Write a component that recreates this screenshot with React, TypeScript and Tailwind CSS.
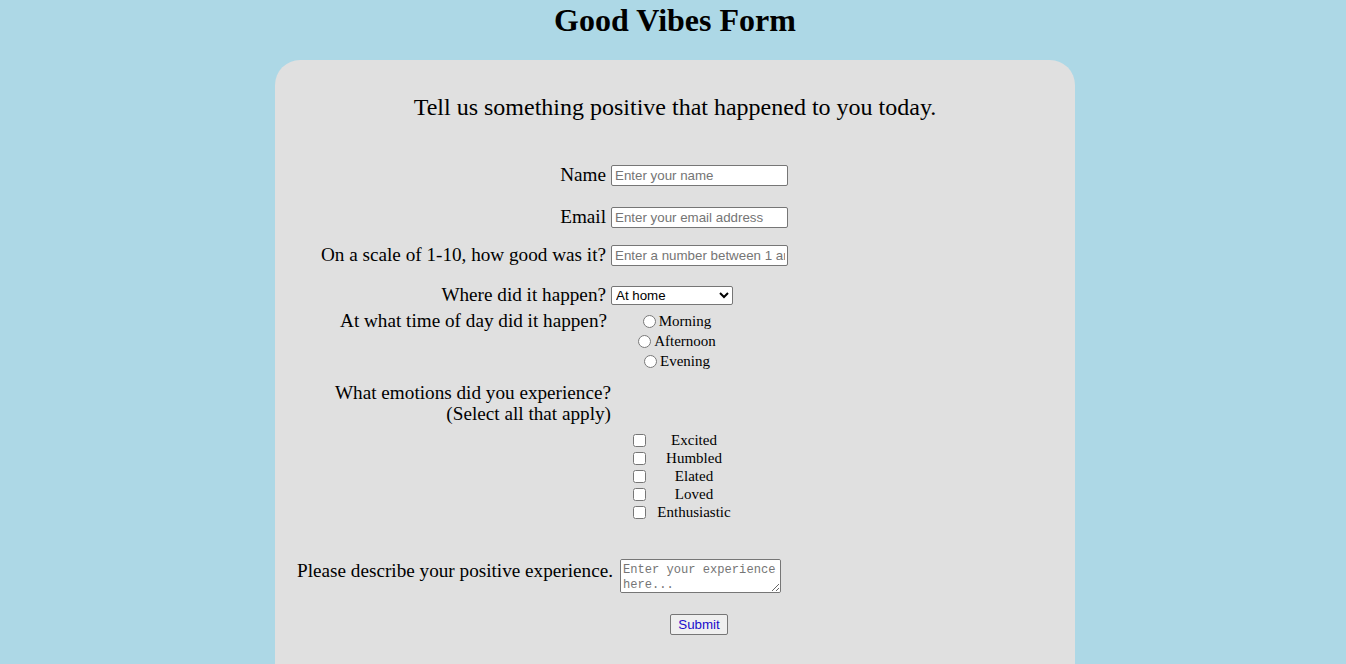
import React from "react";

const serif = "font-['Liberation_Serif','Times_New_Roman',serif]";
const inputCls =
  "h-[21px] w-[177px] rounded-[2px] border border-[#767676] bg-white pl-[3px] pr-[2px] font-['Liberation_Sans',Arial,sans-serif] text-[13.33px] text-black placeholder:text-[#757575]";

const times = ["Morning", "Afternoon", "Evening"];
const emotions = ["Excited", "Humbled", "Elated", "Loved", "Enthusiastic"];

const App = () => {
  return (
    <div className={`min-h-screen bg-[#add8e6] pl-[4px] text-black ${serif}`}>
      <h1 className="pt-[2px] text-center text-[32px] font-bold leading-[37px]">Good Vibes Form</h1>

      <div className="mx-auto mt-[21px] h-[640px] w-[800px] rounded-[25px] bg-[#e0e0e0] pt-[33px]">
        <h2 className="text-center text-[24px] leading-[28px]">
          Tell us something positive that happened to you today.
        </h2>

        <form className="flex flex-col" onSubmit={(e) => e.preventDefault()}>
          <div className="mt-[44px] flex h-[21px] items-center">
            <label className="-mt-[2px] w-[331px] text-right text-[19.2px] leading-[21px]">Name</label>
            <input className={`ml-[5px] ${inputCls}`} type="text" placeholder="Enter your name" />
          </div>

          <div className="mt-[21px] flex h-[21px] items-center">
            <label className="-mt-[2px] w-[331px] text-right text-[19.2px] leading-[21px]">Email</label>
            <input className={`ml-[5px] ${inputCls}`} type="email" placeholder="Enter your email address" />
          </div>

          <div className="mt-[17px] flex h-[21px] items-center">
            <label className="-mt-[2px] w-[331px] text-right text-[19.2px] leading-[21px]">
              On a scale of 1-10, how good was it?
            </label>
            <input
              className={`ml-[5px] ${inputCls}`}
              type="text"
              placeholder="Enter a number between 1 and 10"
            />
          </div>

          <div className="mt-[20px] flex h-[19px] items-center">
            <label className="-mt-[2px] w-[331px] text-right text-[19.2px] leading-[21px]">Where did it happen?</label>
            <select
              className="ml-[5px] h-[19px] w-[122px] rounded-[2px] border border-[#767676] bg-white font-['Liberation_Sans',Arial,sans-serif] text-[13.33px]"
              defaultValue="home"
            >
              <option value="home">At home</option>
              <option value="work">At work</option>
              <option value="school">At school</option>
              <option value="other">Somewhere else</option>
            </select>
          </div>

          <div className="mt-[6px] flex items-start">
            <label className="-mt-[1px] w-[332px] text-right text-[19.2px] leading-[21px]">
              At what time of day did it happen?
            </label>
            <div className="ml-[4px] flex w-[132px] flex-col items-center">
              {times.map((t) => (
                <label key={t} className="flex h-[20px] items-center text-[15px]">
                  <input type="radio" name="time" className="m-0 mr-[3px] h-[13px] w-[13px]" />
                  <span className="mt-[1px]">{t}</span>
                </label>
              ))}
            </div>
          </div>

          <div className="mt-[11px] w-[336px] text-right text-[19.2px] leading-[21px]">
            What emotions did you experience?
            <br />
            (Select all that apply)
          </div>

          <div className="ml-[358px] mt-[7px] flex flex-col">
            {emotions.map((e) => (
              <label key={e} className="flex h-[18px] items-center text-[15px]">
                <input type="checkbox" className="m-0 h-[13px] w-[13px]" />
                <span className="ml-[8px] w-[80px] text-center">{e}</span>
              </label>
            ))}
          </div>

          <div className="mt-[38px] flex items-start">
            <label className="mt-[1px] w-[338px] text-right text-[19.2px] leading-[21px]">
              Please describe your positive experience.
            </label>
            <textarea
              className="ml-[7px] h-[34px] w-[161px] rounded-[2px] border border-[#767676] bg-white px-[2px] pt-[3px] font-['Liberation_Mono','Courier_New',monospace] text-[12.1px] leading-[15px] placeholder:text-[#757575]"
              placeholder="Enter your experience here..."
            />
          </div>

          <div className="mt-[21px] flex">
            <button
              type="submit"
              className="ml-[395px] h-[21px] w-[58px] rounded-[2px] border border-[#767676] bg-[#efefef] font-['Liberation_Sans',Arial,sans-serif] text-[13.33px] text-[#1a0dcc]"
            >
              Submit
            </button>
          </div>
        </form>
      </div>
    </div>
  );
};

export default App;
